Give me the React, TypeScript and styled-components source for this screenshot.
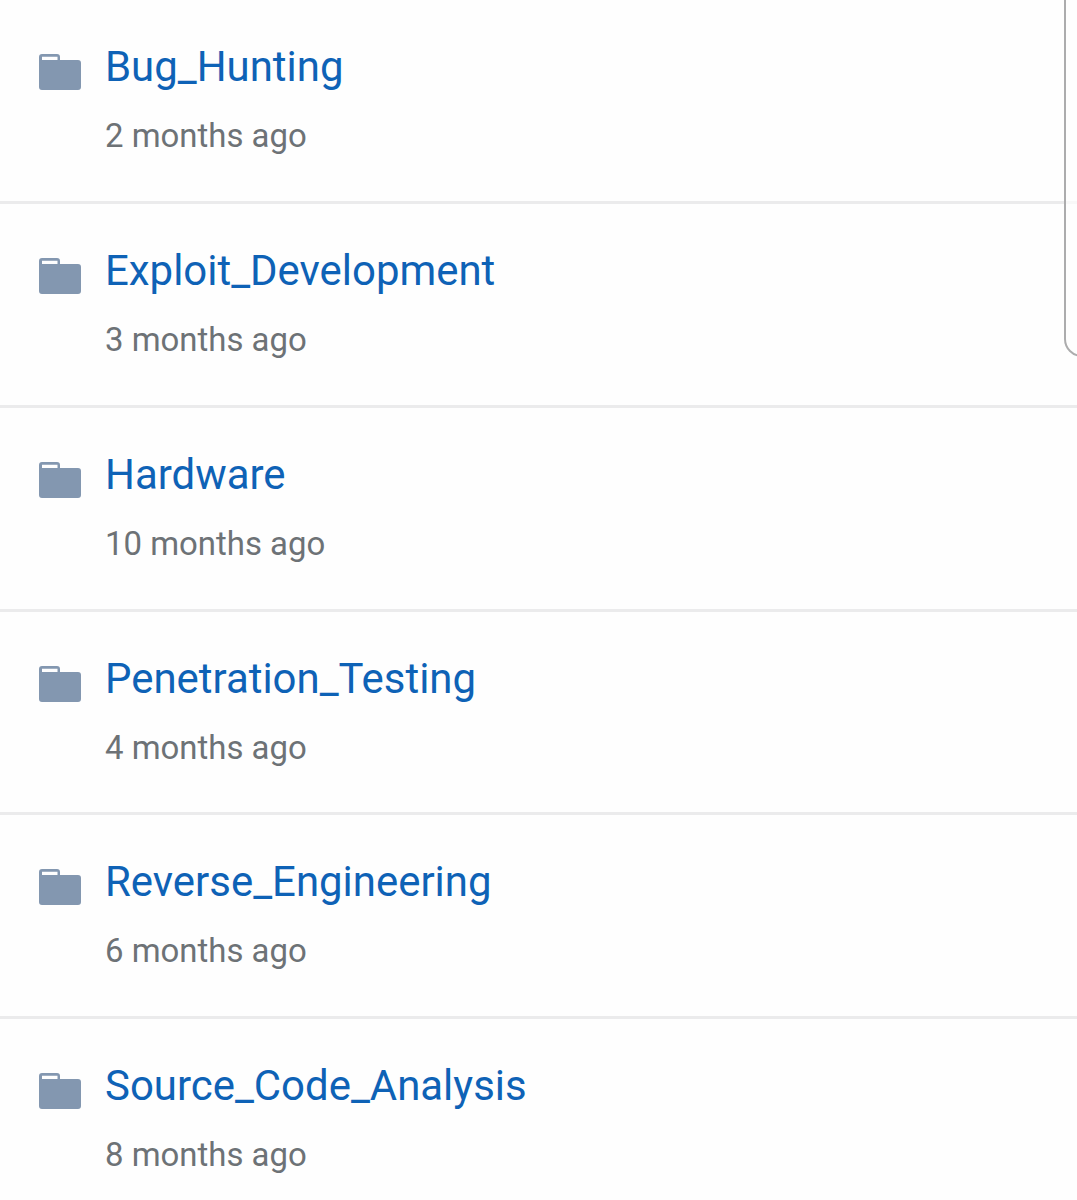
import React from "react";
import styled, { createGlobalStyle } from "styled-components";

const GlobalStyle = createGlobalStyle`
  * { box-sizing: border-box; }
  html, body { margin: 0; background: #fff; overflow: hidden; }
`;

const Page = styled.main`
  position: relative;
  height: 1200px;
  overflow: hidden;
  background: #fefefe;
  font-family: Roboto, "Liberation Sans", sans-serif;
`;

const List = styled.ul`
  list-style: none;
  margin: 0;
  padding: 0;
`;

const Row = styled.li`
  display: flex;
  height: 203.85px;
  padding: 42px 39px 0;
  gap: 24px;
  border-bottom: 3px solid #ebebec;
`;

const FolderIcon = styled.svg`
  flex: none;
  width: 42px;
  height: 36px;
  margin-top: 12px;
`;

const Details = styled.div`
  display: flex;
  flex-direction: column;
  gap: 22px;
`;

const Name = styled.a`
  color: #0e62b6;
  font-size: 41.93px;
  line-height: 50px;
  text-decoration: none;
  white-space: nowrap;
`;

const Age = styled.time`
  color: #6d7276;
  font-size: 32.93px;
  line-height: 44px;
  white-space: nowrap;
`;

const SidePanel = styled.div`
  position: absolute;
  top: -20px;
  right: -40px;
  width: 53px;
  height: 377px;
  border: 2px solid #acacad;
  border-radius: 18px;
  background: rgba(254, 254, 254, 0.7);
`;

const folders = [
  { name: "Bug_Hunting", age: "2 months ago" },
  { name: "Exploit_Development", age: "3 months ago" },
  { name: "Hardware", age: "10 months ago" },
  { name: "Penetration_Testing", age: "4 months ago" },
  { name: "Reverse_Engineering", age: "6 months ago" },
  { name: "Source_Code_Analysis", age: "8 months ago" },
];

export default function App() {
  return (
    <Page>
      <GlobalStyle />
      <List>
        {folders.map((folder) => (
          <Row key={folder.name}>
            <FolderIcon viewBox="0 0 42 36" preserveAspectRatio="none" fill="#8397b0">
              <path
                fillRule="evenodd"
                d="M39 6H21V3Q21 0 18 0H3Q0 0 0 3V33Q0 36 3 36H39Q42 36 42 33V9Q42 6 39 6ZM18.5 6H3V2.8H18.5Z"
              />
            </FolderIcon>
            <Details>
              <Name>{folder.name}</Name>
              <Age>{folder.age}</Age>
            </Details>
          </Row>
        ))}
      </List>
      <SidePanel />
    </Page>
  );
}
